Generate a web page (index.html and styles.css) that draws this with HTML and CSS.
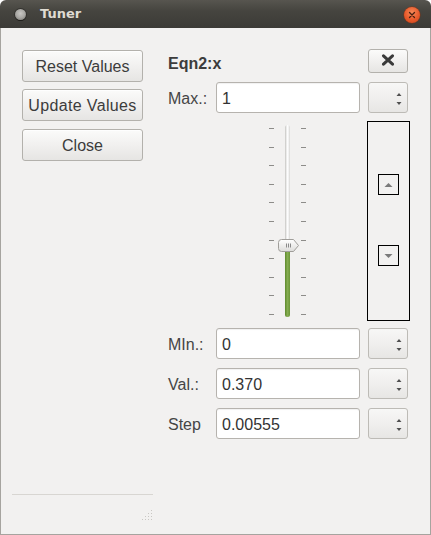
FILE: index.html
```html
<!DOCTYPE html>
<html>
<head>
<meta charset="utf-8">
<title>Tuner</title>
<link rel="stylesheet" href="styles.css">
</head>
<body>
<div class="window">
  <div class="titlebar">
    <span class="win-icon"></span>
    <span class="title">Tuner</span>
    <span class="close-btn">
      <svg width="16" height="16" viewBox="0 0 16 16"><path d="M5.5 5.5 L10.5 10.5 M10.5 5.5 L5.5 10.5" stroke="#4a2010" stroke-width="1.3" stroke-linecap="round"/></svg>
    </span>
  </div>
  <div class="content">
    <div class="left">
      <div class="btns">
        <button class="btn">Reset Values</button>
        <button class="btn btn-wide">Update Values</button>
        <button class="btn btn-last">Close</button>
      </div>
      <div class="sep"></div>
      <div class="grip">
        <svg width="12" height="12" viewBox="0 0 12 12" fill="#c9c7c3">
          <rect x="10" y="1" width="1" height="1"/>
          <rect x="10" y="4" width="1" height="1"/><rect x="7" y="4" width="1" height="1"/>
          <rect x="10" y="7" width="1" height="1"/><rect x="7" y="7" width="1" height="1"/><rect x="4" y="7" width="1" height="1"/>
          <rect x="10" y="10" width="1" height="1"/><rect x="7" y="10" width="1" height="1"/><rect x="4" y="10" width="1" height="1"/><rect x="1" y="10" width="1" height="1"/>
        </svg>
      </div>
    </div>
    <div class="right">
      <div class="row head">
        <span class="name">Eqn2:x</span>
        <span></span>
        <button class="xbtn">
          <svg width="14" height="12" viewBox="0 0 14 12"><path d="M2.5 1.8 L11.5 10.2 M11.5 1.8 L2.5 10.2" stroke="#3a3a3a" stroke-width="3" stroke-linecap="round"/></svg>
        </button>
      </div>
      <div class="row r-max">
        <span class="lbl">Max.:</span>
        <div class="input">1</div>
        <div class="spin"><svg width="40" height="31" viewBox="0 0 40 31"><path d="M28.5 14 L33.5 14 L31 11 Z M28.5 20 L33.5 20 L31 23 Z" fill="#505050"/></svg></div>
      </div>
      <div class="row r-slider">
        <span></span>
        <div class="slider-cell">
          <div class="slider">
            <div class="ticks"><i></i><i></i><i></i><i></i><i></i><i></i><i></i><i></i><i></i><i></i><i></i></div>
            <div class="track"><div class="fill"></div></div>
            <div class="ticks"><i></i><i></i><i></i><i></i><i></i><i></i><i></i><i></i><i></i><i></i><i></i></div>
            <svg class="handle" width="22" height="14" viewBox="0 0 22 14">
              <defs><linearGradient id="hg" x1="0" y1="0" x2="0" y2="1"><stop offset="0" stop-color="#ffffff"/><stop offset="1" stop-color="#dddcda"/></linearGradient></defs>
              <path d="M3.5 0.5 H15.5 L20.5 6.5 L15.5 12.5 H3.5 Q0.5 12.5 0.5 9.5 V3.5 Q0.5 0.5 3.5 0.5 Z" fill="url(#hg)" stroke="#a09e9a"/>
              <path d="M8.5 4.5 V8.5 M10.5 4.5 V8.5 M12.5 4.5 V8.5" stroke="#8a8a8a" stroke-width="1"/>
            </svg>
          </div>
        </div>
        <div class="stepbox">
          <div class="sbtn"><svg width="9" height="6" viewBox="0 0 9 6"><path d="M0.5 5 L8.5 5 L4.5 1 Z" fill="#7a7a7a"/></svg></div>
          <div class="sbtn"><svg width="9" height="6" viewBox="0 0 9 6"><path d="M0.5 1 L8.5 1 L4.5 5 Z" fill="#7a7a7a"/></svg></div>
        </div>
      </div>
      <div class="row r-min">
        <span class="lbl">MIn.:</span>
        <div class="input">0</div>
        <div class="spin"><svg width="40" height="31" viewBox="0 0 40 31"><path d="M28.5 14 L33.5 14 L31 11 Z M28.5 20 L33.5 20 L31 23 Z" fill="#505050"/></svg></div>
      </div>
      <div class="row r-val">
        <span class="lbl">Val.:</span>
        <div class="input">0.370</div>
        <div class="spin"><svg width="40" height="31" viewBox="0 0 40 31"><path d="M28.5 14 L33.5 14 L31 11 Z M28.5 20 L33.5 20 L31 23 Z" fill="#505050"/></svg></div>
      </div>
      <div class="row r-step">
        <span class="lbl">Step</span>
        <div class="input">0.00555</div>
        <div class="spin"><svg width="40" height="31" viewBox="0 0 40 31"><path d="M28.5 14 L33.5 14 L31 11 Z M28.5 20 L33.5 20 L31 23 Z" fill="#505050"/></svg></div>
      </div>
    </div>
  </div>
</div>
</body>
</html>
```

FILE: styles.css
```css
* { box-sizing: border-box; }
html, body { margin: 0; padding: 0; }
body {
  width: 431px;
  height: 535px;
  background: #ffffff;
  font-family: "Liberation Sans", Arial, sans-serif;
  font-size: 16px;
  color: #3c3c3c;
  overflow: hidden;
}
.window {
  width: 431px;
  height: 535px;
  display: flex;
  flex-direction: column;
}
.titlebar {
  height: 28px;
  flex: none;
  background: linear-gradient(#57554f, #45443f 40%, #3c3b37);
  border-radius: 6px 6px 0 0;
  display: flex;
  align-items: center;
  padding-left: 15px;
  padding-right: 11px;
}
.win-icon {
  width: 11px;
  height: 11px;
  border-radius: 50%;
  background: radial-gradient(circle at 50% 40%, #c8c7c4 0, #a9a8a4 50%, #6e6c68 100%);
  box-shadow: 0 1px 0 #1f1e1b, 0 0 0 1px #33322e;
  margin-top: 1px;
}
.title {
  font-family: "DejaVu Sans", sans-serif;
  font-weight: bold;
  font-size: 13px;
  color: #dfdbd2;
  margin-left: 14px;
  margin-top: -1px;
}
.close-btn {
  margin-left: auto;
  width: 16px;
  height: 16px;
  border-radius: 50%;
  background: radial-gradient(circle at 50% 35%, #f58a5a 0, #e9592a 55%, #c7441a 100%);
  box-shadow: 0 0 0 0.5px #8b3110;
  display: flex;
  margin-top: 2px;
}
.content {
  flex: 1;
  display: flex;
  background: #f2f1f0;
  border-left: 1px solid #a6a49f;
  border-right: 1px solid #a6a49f;
  border-bottom: 1px solid #a6a49f;
}
.left {
  width: 159px;
  flex: none;
  display: flex;
  flex-direction: column;
}
.btns {
  display: flex;
  flex-direction: column;
  gap: 7px;
  padding-left: 21px;
  padding-top: 22px;
}
.btn {
  width: 121px;
  height: 32px;
  font-family: "Liberation Sans", Arial, sans-serif;
  font-size: 16px;
  color: #3c3c3c;
  background: linear-gradient(#fbfbfa, #f1f0ef 50%, #e6e5e3);
  border: 1px solid #b3b1ac;
  border-radius: 3px;
  padding: 1px 0 0;
  margin: 0;
  box-shadow: 0 1px 0 rgba(255,255,255,0.8) inset;
}
.btn-wide { letter-spacing: 0.35px; }
.btn-last { margin-top: 1px; }
.sep {
  margin-top: auto;
  margin-left: 11px;
  width: 141px;
  height: 1px;
  background: #d8d6d2;
}
.grip {
  display: flex;
  justify-content: flex-end;
  padding-right: 7px;
  margin-top: 14px;
  margin-bottom: 13px;
  height: 12px;
}
.right {
  padding-left: 8px;
  padding-top: 21px;
  display: flex;
  flex-direction: column;
}
.row {
  display: grid;
  grid-template-columns: 40px 144px 40px;
  column-gap: 8px;
  align-items: center;
}
.head { height: 24px; }
.r-max { margin-top: 9px; height: 31px; }
.r-slider { margin-top: 8px; height: 200px; align-items: stretch; }
.r-min { margin-top: 7px; height: 31px; }
.r-val { margin-top: 9px; height: 31px; }
.r-step { margin-top: 9px; height: 31px; }
.name {
  font-weight: bold;
  font-size: 16px;
  color: #3c3c3c;
  white-space: nowrap;
  margin-top: 5px;
}
.lbl {
  font-size: 16px;
  color: #454545;
  white-space: nowrap;
  padding-top: 3px;
}
.xbtn {
  width: 40px;
  height: 24px;
  padding: 0;
  margin: 0;
  border: 1px solid #b3b1ac;
  border-radius: 3px;
  background: linear-gradient(#fbfbfa, #f1f0ef 50%, #e6e5e3);
  display: flex;
  align-items: center;
  justify-content: center;
}
.xbtn svg { margin-top: -3px; }
.input {
  height: 31px;
  background: #ffffff;
  border: 1px solid #b6b3ae;
  border-radius: 3px;
  box-shadow: inset 0 1px 1px rgba(0,0,0,0.06);
  padding: 3px 0 0 5px;
  display: flex;
  align-items: center;
  font-size: 16px;
  color: #333333;
}
.spin {
  height: 31px;
  border: 1px solid #bdbbb6;
  border-radius: 3px;
  background: linear-gradient(#f7f7f6, #f0efee 50%, #e7e6e4);
  position: relative;
}
.spin svg { position: absolute; left: -1px; top: -1px; }
.slider-cell {
  display: flex;
  justify-content: center;
}
.slider {
  position: relative;
  display: flex;
  gap: 11px;
  padding: 4px 0;
  width: 37px;
  margin-left: -1px;
}
.ticks {
  width: 5px;
  display: flex;
  flex-direction: column;
  justify-content: space-between;
  padding: 3px 0 2px;
}
.ticks i {
  display: block;
  width: 5px;
  height: 1px;
  background: #8d8c89;
}
.track {
  width: 5px;
  border-radius: 3px;
  background: linear-gradient(to right, #c4c3c0, #ffffff 45%, #f2f2f2 70%, #d7d6d3);
  position: relative;
}
.fill {
  position: absolute;
  left: 0;
  right: 0;
  bottom: 0;
  height: 68px;
  border-radius: 0 0 3px 3px;
  background: linear-gradient(to right, #5d8a2c, #86ad52 50%, #6b9638);
}
.handle {
  position: absolute;
  left: 9px;
  top: 118px;
}
.stepbox {
  margin-left: -1px;
  width: 43px;
  border: 1px solid #000000;
  display: flex;
  flex-direction: column;
  align-items: center;
  padding-top: 52px;
  gap: 50px;
}
.sbtn {
  width: 21px;
  height: 21px;
  border: 1px solid #000000;
  display: flex;
  align-items: center;
  justify-content: center;
}
```
